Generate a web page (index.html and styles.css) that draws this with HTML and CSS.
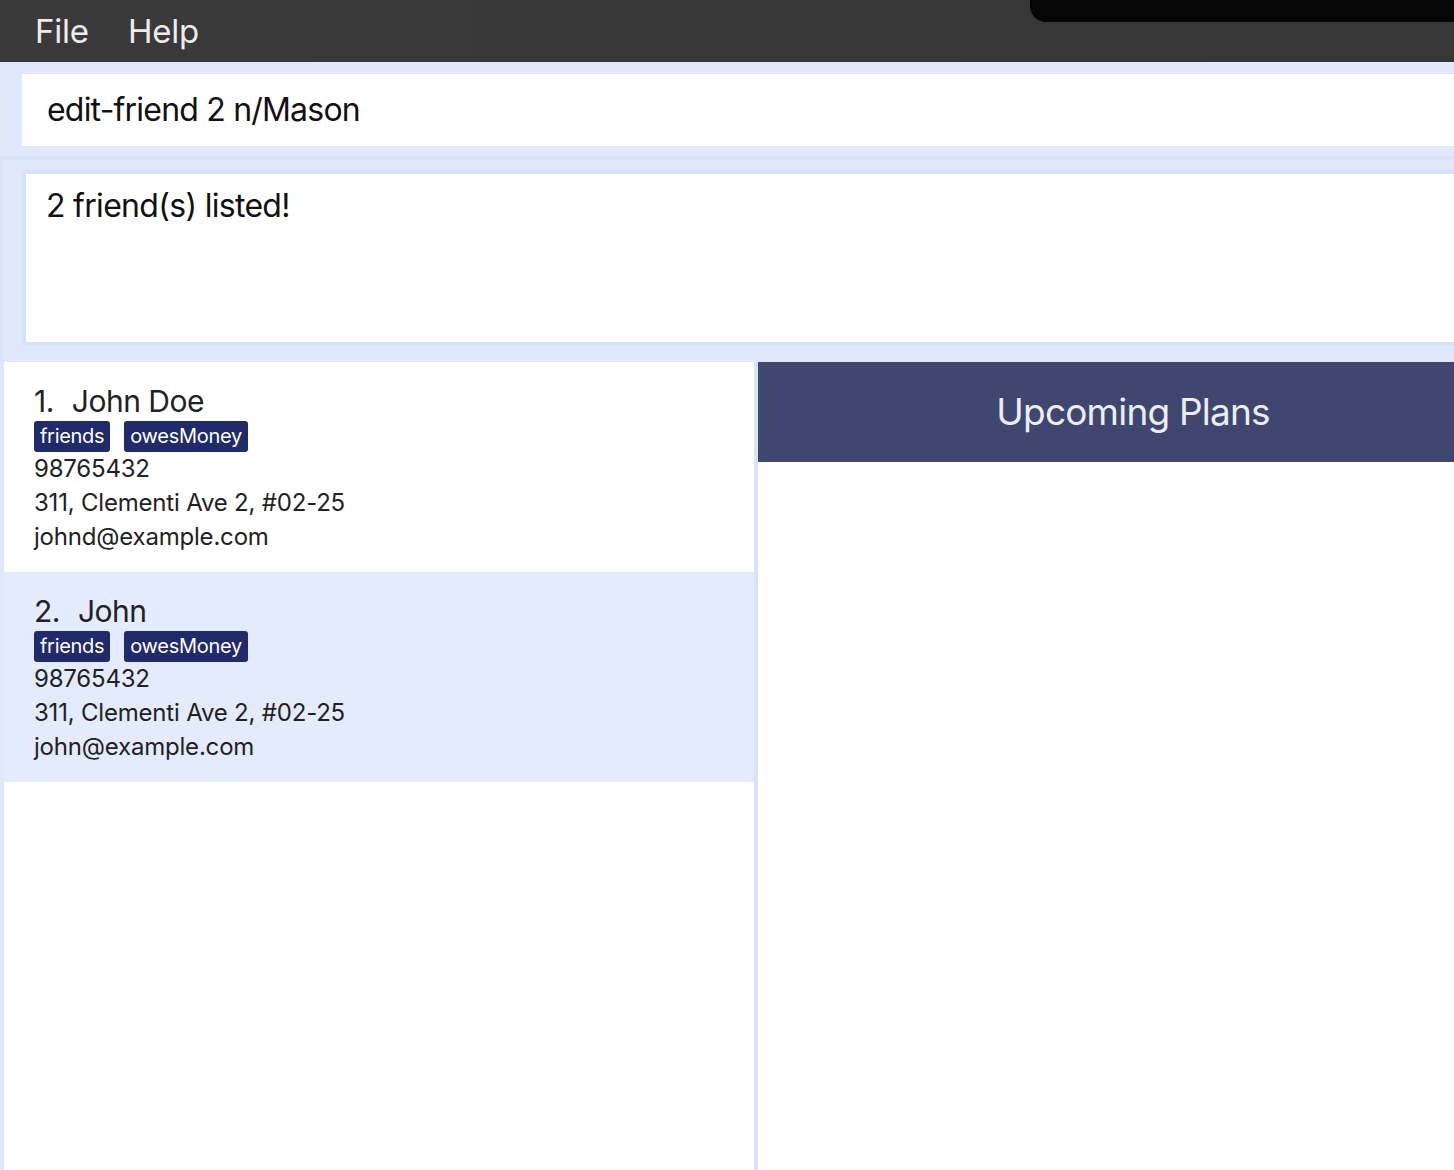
FILE: index.html
```html
<!DOCTYPE html>
<html>
<head>
<meta charset="utf-8">
<link rel="stylesheet" href="styles.css">
</head>
<body>
<div class="menubar">
  <span class="menu-item">File</span>
  <span class="menu-item">Help</span>
  <div class="notch"></div>
</div>
<div class="command-area">
  <div class="command-box">edit-friend 2 n/Mason</div>
</div>
<div class="result-area">
  <div class="result-box">2 friend(s) listed!</div>
</div>
<div class="main">
  <div class="list-panel">
    <div class="card">
      <div class="name"><span class="index">1.</span>John Doe</div>
      <div class="tags"><span class="tag">friends</span><span class="tag">owesMoney</span></div>
      <div class="field">98765432</div>
      <div class="field">311, Clementi Ave 2, #02-25</div>
      <div class="field">johnd@example.com</div>
    </div>
    <div class="card selected">
      <div class="name"><span class="index">2.</span>John</div>
      <div class="tags"><span class="tag">friends</span><span class="tag">owesMoney</span></div>
      <div class="field">98765432</div>
      <div class="field">311, Clementi Ave 2, #02-25</div>
      <div class="field">john@example.com</div>
    </div>
  </div>
  <div class="plans-panel">
    <div class="plans-header">Upcoming Plans</div>
  </div>
</div>
</body>
</html>
```
FILE: styles.css
```css
html, body {
  margin: 0;
  padding: 0;
  height: 1170px;
  overflow: hidden;
}
body {
  background: #dfe8fb;
  font-family: Inter, "Noto Sans", "Liberation Sans", sans-serif;
  width: 1454px;
}
.menubar {
  position: relative;
  height: 62px;
  background: linear-gradient(90deg, #3a3a3a, #363636);
  display: flex;
  align-items: center;
  padding-left: 35px;
  gap: 39px;
  box-sizing: border-box;
}
.menu-item {
  color: #ececec;
  font-size: 33px;
  line-height: 62px;
  letter-spacing: -0.2px;
}
.notch {
  position: absolute;
  top: 0;
  left: 1030px;
  right: 0;
  height: 22px;
  background: #060606;
  border-bottom-left-radius: 16px;
}
.command-area {
  padding: 12px 0 10px 22px;
}
.command-box {
  background: #fff;
  height: 72px;
  padding-left: 25px;
  font-size: 32px;
  line-height: 72px;
  color: #111;
  letter-spacing: -0.8px;
}
.result-area {
  border-top: 4px solid #d8e3fa;
  border-left: 2px solid #d8e3fa;
  padding: 10px 0 17px 20px;
}
.result-box {
  background: #fff;
  border: 4px solid #d6e2fa;
  border-right: none;
  border-bottom-width: 3px;
  height: 175px;
  box-sizing: border-box;
  padding: 12px 0 0 20px;
  font-size: 32px;
  line-height: 40px;
  color: #111;
  letter-spacing: -0.7px;
}
.main {
  display: flex;
  height: 808px;
  padding-left: 4px;
}
.list-panel {
  width: 750px;
  background: #fff;
  border-right: 4px solid #d8e3fa;
}
.plans-panel {
  flex: 1;
  background: #fff;
}
.plans-header {
  height: 100px;
  background: #3f4771;
  color: #eceef5;
  font-size: 37px;
  line-height: 100px;
  text-align: center;
  padding-left: 54px;
  letter-spacing: -0.8px;
}
.card {
  height: 210px;
  box-sizing: border-box;
  padding: 20px 0 0 30px;
  color: #222;
}
.card.selected {
  background: #e4ebfc;
}
.name {
  font-size: 30px;
  line-height: 38px;
  letter-spacing: -0.5px;
}
.index {
  margin-right: 18px;
}
.tags {
  display: flex;
  gap: 14px;
  height: 32px;
  align-items: center;
}
.tag {
  background: #212a6a;
  color: #fff;
  font-size: 20px;
  line-height: 31px;
  padding: 0 6px;
  border-radius: 3px;
  letter-spacing: -0.3px;
}
.field {
  font-size: 24px;
  line-height: 34px;
  letter-spacing: -0.2px;
}
```
